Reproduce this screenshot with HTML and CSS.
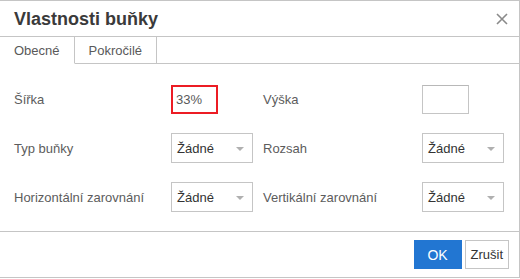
FILE: index.html
```html
<!DOCTYPE html>
<html lang="cs">
<head>
<meta charset="utf-8">
<link rel="stylesheet" href="styles.css">
</head>
<body>
<div class="dialog">
  <div class="head">
    <div class="title">Vlastnosti buňky</div>
    <button class="close" aria-label="Zavřít">
      <svg width="12" height="12" viewBox="0 0 12 12"><path d="M1 1 L11 11 M11 1 L1 11" stroke="#8a8a8a" stroke-width="1.6" fill="none"/></svg>
    </button>
  </div>
  <div class="tabs">
    <div class="tab active">Obecné</div>
    <div class="tab">Pokročilé</div>
    <div class="tab-fill"></div>
  </div>
  <div class="body">
    <div class="label">Šířka</div>
    <div class="ctl"><div class="input focus">33%</div></div>
    <div class="label">Výška</div>
    <div class="ctl"><div class="input"></div></div>

    <div class="label">Typ buňky</div>
    <div class="ctl"><div class="select">Žádné<span class="caret"></span></div></div>
    <div class="label">Rozsah</div>
    <div class="ctl"><div class="select">Žádné<span class="caret"></span></div></div>

    <div class="label">Horizontální zarovnání</div>
    <div class="ctl"><div class="select">Žádné<span class="caret"></span></div></div>
    <div class="label">Vertikální zarovnání</div>
    <div class="ctl"><div class="select">Žádné<span class="caret"></span></div></div>
  </div>
  <div class="foot">
    <button class="btn primary">OK</button>
    <button class="btn">Zrušit</button>
  </div>
</div>
</body>
</html>
```

FILE: styles.css
```css
* { box-sizing: border-box; }
html, body { margin: 0; padding: 0; background: #fff; }
body { font-family: "Liberation Sans", Arial, sans-serif; color: #595959; }

.dialog {
  width: 521px;
  height: 278px;
  margin-left: -1px;
  border: 1px solid #c5c5c5;
  display: flex;
  flex-direction: column;
  background: #fff;
}

.head {
  height: 36px;
  flex: none;
  border-bottom: 1px solid #c5c5c5;
  display: flex;
  align-items: center;
  justify-content: space-between;
  padding: 0 11px 0 14px;
}
.title {
  font-size: 18px;
  font-weight: bold;
  color: #3a3a3a;
  padding-top: 1px;
}
.close {
  border: 0;
  background: none;
  padding: 0;
  width: 12px;
  height: 12px;
  display: flex;
  margin-top: 1px;
}

.tabs {
  height: 27px;
  flex: none;
  display: flex;
}
.tab {
  font-size: 13px;
  color: #595959;
  padding: 0 14px;
  display: flex;
  align-items: center;
  border-right: 1px solid #c5c5c5;
  border-bottom: 1px solid #c5c5c5;
  padding-top: 1px;
}
.tab.active { border-bottom-color: #fff; }
.tab-fill { flex: 1; border-bottom: 1px solid #c5c5c5; }

.body {
  flex: 1;
  display: grid;
  grid-template-columns: 157px 92px 159px 82px;
  grid-auto-rows: 30px;
  row-gap: 19px;
  padding: 20px 0 0 14px;
  align-content: start;
}
.label {
  font-size: 13px;
  color: #5c5c5c;
  display: flex;
  align-items: center;
}
.ctl { display: flex; align-items: center; }

.input {
  width: 47px;
  height: 29px;
  border: 1px solid #c5c5c5;
  border-top-color: #b8b8b8;
  font-size: 13px;
  color: #595959;
  display: flex;
  align-items: center;
  padding-left: 4px;
}
.input.focus {
  border: 2px solid #ec1c24;
  padding-left: 3px;
}

.select {
  width: 82px;
  height: 30px;
  border: 1px solid #c5c5c5;
  font-size: 13px;
  color: #333;
  display: flex;
  align-items: center;
  justify-content: space-between;
  padding: 0 8px 0 5px;
}
.caret {
  width: 0;
  height: 0;
  border-left: 4px solid transparent;
  border-right: 4px solid transparent;
  border-top: 4px solid #b0b0b0;
  margin-top: 1px;
}

.foot {
  height: 46px;
  flex: none;
  border-top: 1px solid #c5c5c5;
  display: flex;
  justify-content: flex-end;
  align-items: flex-start;
  gap: 3px;
  padding: 8px 10px 0 0;
}
.btn {
  font-family: "Liberation Sans", Arial, sans-serif;
  font-size: 13px;
  height: 29px;
  border: 1px solid #c5c5c5;
  background: #fff;
  color: #333;
  padding: 0 5px;
}
.btn.primary {
  background: #2276d2;
  border-color: #2276d2;
  color: #fff;
  width: 48px;
  font-size: 14px;
}
```
